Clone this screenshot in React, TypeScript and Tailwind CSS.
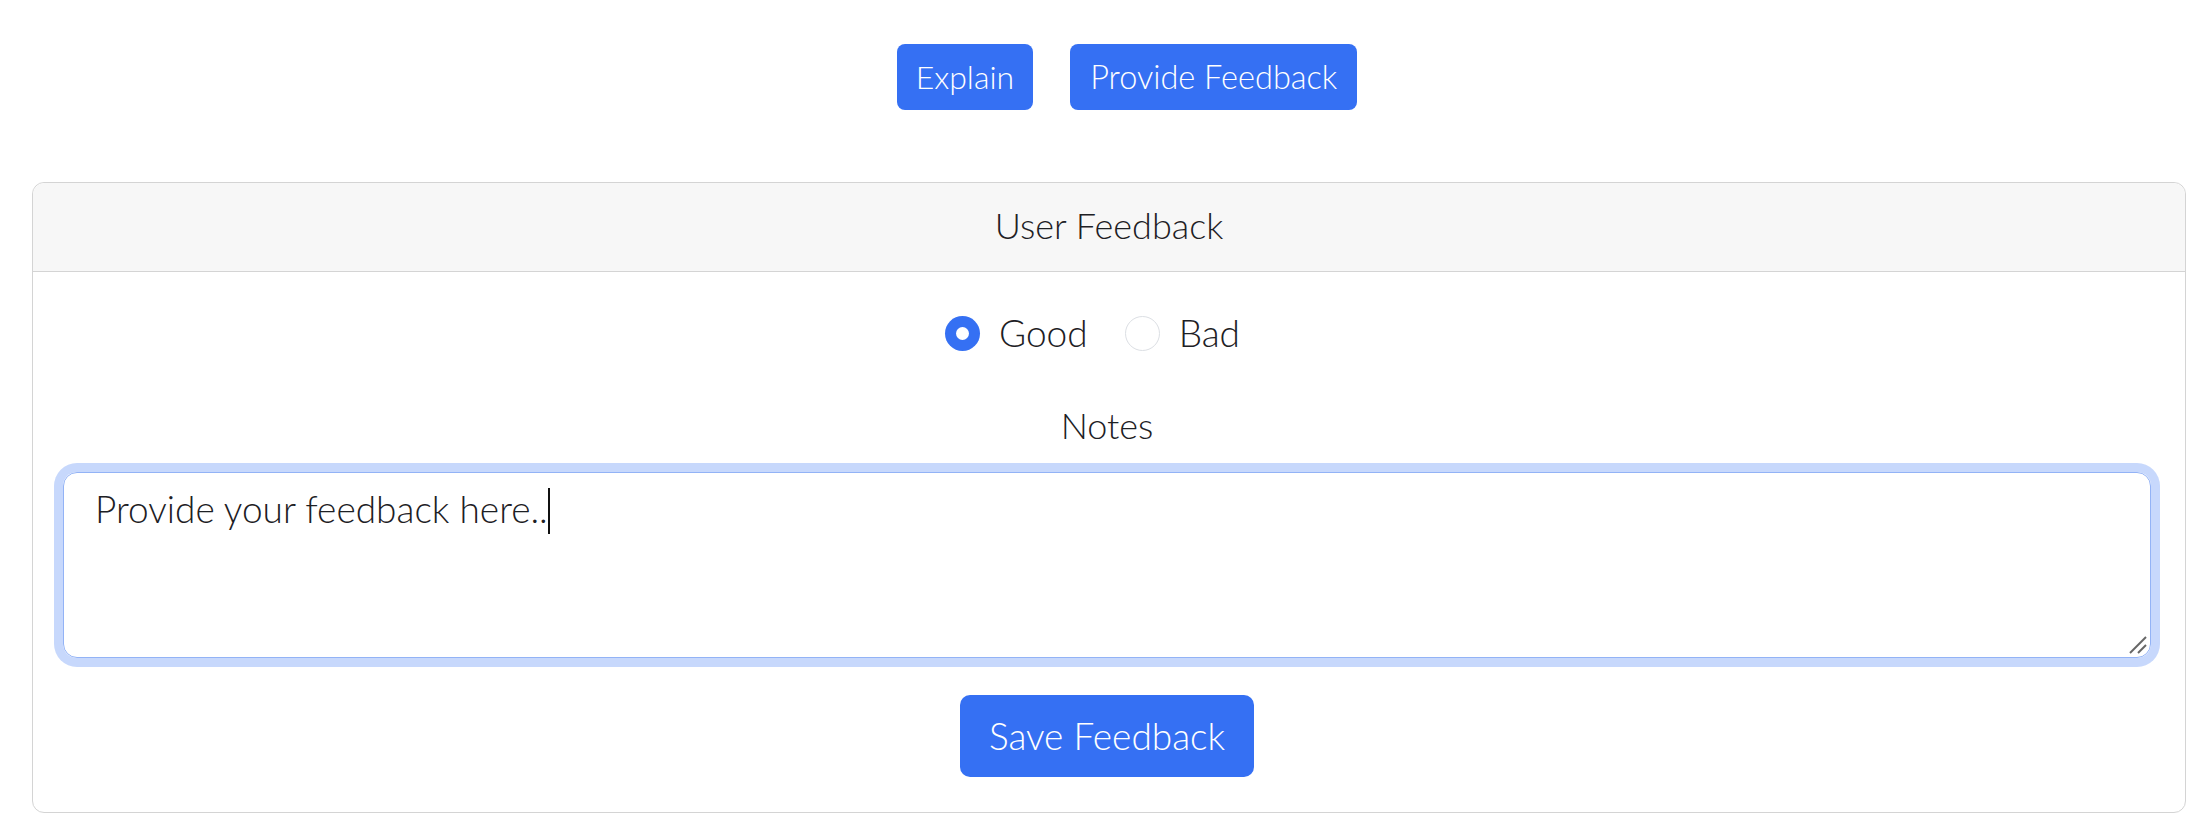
import React from 'react';

const font = { fontFamily: 'Lato, "Open Sans", sans-serif' };

const Radio = ({ checked }: { checked: boolean }) =>
  checked ? (
    <span className="flex h-[35px] w-[35px] items-center justify-center rounded-full bg-[#3570f3]">
      <span className="h-[13px] w-[13px] rounded-full bg-white" />
    </span>
  ) : (
    <span className="h-[35px] w-[35px] rounded-full border border-[#dcdfe4] bg-white" />
  );

const App = () => {
  return (
    <div className="min-h-[830px] bg-white pl-[32px] pr-[18px] pt-[44px] font-light text-[#1d2024]" style={font}>
      <div className="flex justify-center">
        <button className="ml-[36px] h-[66px] rounded-[8px] bg-[#3570f3] px-[19px] text-[32px] leading-[40px] text-white">
          Explain
        </button>
        <button className="ml-[37px] h-[66px] rounded-[8px] bg-[#3570f3] px-[20px] text-[32.5px] leading-[40px] text-white">
          Provide Feedback
        </button>
      </div>

      <div className="mt-[72px] rounded-[12px] border border-[#d4d4d4]">
        <div className="flex h-[89px] items-center justify-center rounded-t-[12px] border-b border-[#d4d4d4] bg-[#f7f7f7] pb-[4px] text-[36px] leading-[44px]">
          User Feedback
        </div>

        <div className="flex flex-col items-center pb-[35px] pl-[30px] pr-[34px] pt-[26px]">
          <div className="flex h-[70px] items-center text-[37px] leading-[44px]">
            <div className="flex items-center">
              <Radio checked />
              <span className="ml-[19px]">Good</span>
            </div>
            <div className="ml-[37px] mr-[29px] flex items-center">
              <Radio checked={false} />
              <span className="ml-[19px]">Bad</span>
            </div>
          </div>

          <div className="mt-[35px] text-[36px] leading-[44px]">Notes</div>

          <div className="relative mt-[25px] h-[186px] w-full rounded-[14px] border border-[#93b3f6] px-[31px] pt-[14px] text-left text-[37px] leading-[44px] shadow-[0_0_0_9px_#c7d8fc]">
            <span>Provide your feedback here..</span>
            <span className="inline-block h-[46px] w-[2px] bg-[#111] align-[-11px]" />
            <svg className="absolute bottom-[2px] right-[2px]" width="20" height="20" viewBox="0 0 20 20">
              <line x1="2" y1="18" x2="18" y2="2" stroke="#666" strokeWidth="2" />
              <line x1="10" y1="18" x2="18" y2="10" stroke="#666" strokeWidth="2" />
            </svg>
          </div>

          <button className="mt-[37px] h-[82px] rounded-[10px] bg-[#3570f3] px-[29px] text-[37px] leading-[44px] text-white">
            Save Feedback
          </button>
        </div>
      </div>
    </div>
  );
};

export default App;
